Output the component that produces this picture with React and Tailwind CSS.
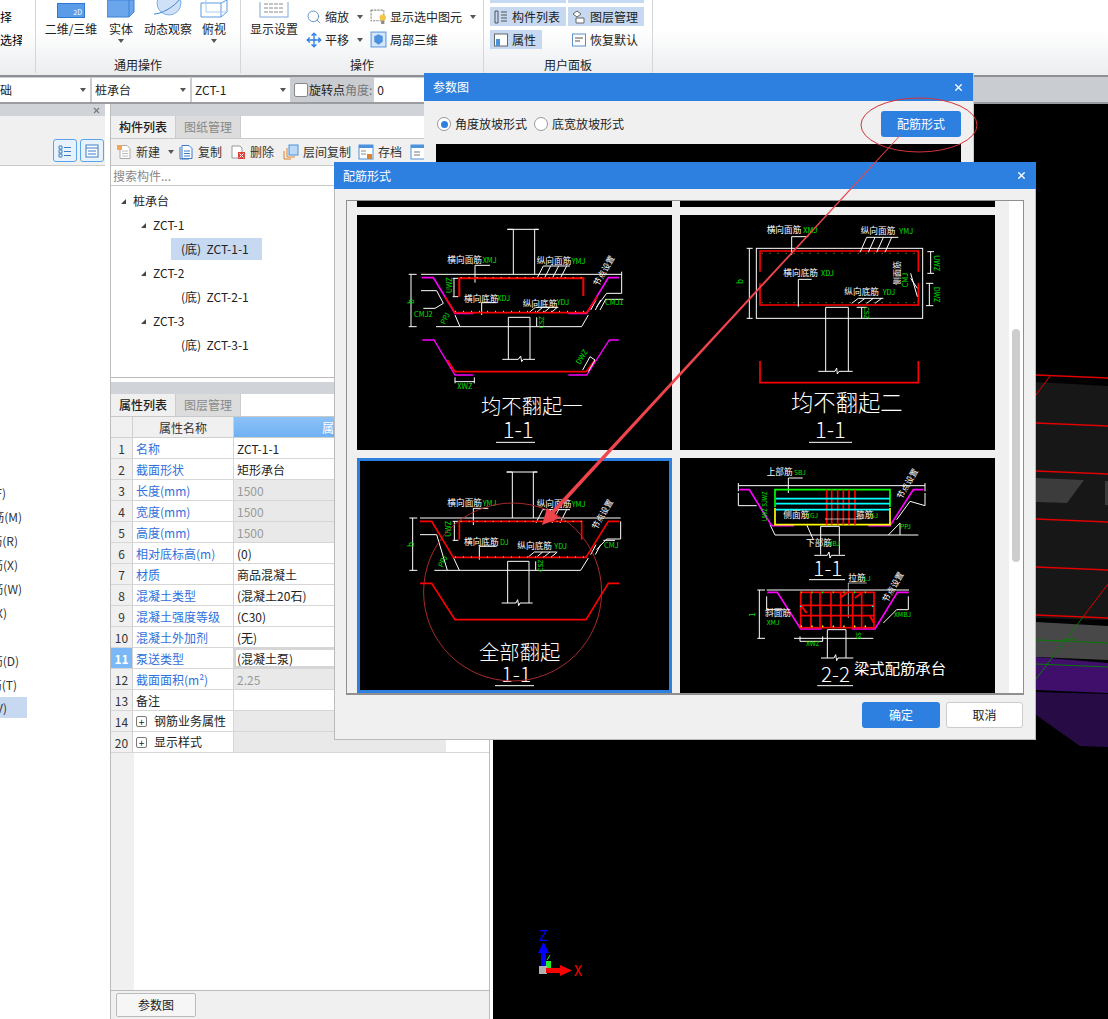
import React from 'react';
import { Search, Move, X } from 'lucide-react';

const W = 'white', G = '#00e000', R = '#ff0000', M = '#ff00ff', Y = '#ffff00', C = '#00ffff';
const L = ({ p, c = W, w = 3, d }) => <polyline points={p} fill="none" stroke={c} strokeWidth={w} strokeDasharray={d} />;
const T = ({ x, y, c = W, s = 26, r, children, w }) => (
  <text x={x} y={y} fill={c} fontSize={s} fontWeight={w} transform={r ? `rotate(${r} ${x} ${y})` : undefined}>{children}</text>
);
const Hatch = ({ xs, y1, y2, dx }) => xs.map((x) => <L key={x} p={`${x},${y1} ${x + dx},${y2}`} />);
const Slope = ({ x, y, r = -60 }) => <T x={x} y={y} r={r} s={25}>节点设置</T>;

function Thumb1() {
  return (
    <svg viewBox="51 45 945 705" className="block w-[315px] h-[235px] bg-black">
      <L p="243,223 845,223" />
      <L p="520,223 520,88 502,88 596,88 584,88 584,223" />
      <L p="213,223 213,380" /><L p="206,223 230,223" /><L p="206,380 230,380" />
      <L p="243,272 290,272 310,310 285,325 250,325" />
      <L p="288,380 725,380 745,345" /><L p="345,345 360,380" />
      <L p="505,478 505,352 570,352 570,478" /><L p="487,478 535,478 542,468 545,485 550,478 585,478" />
      <L p="590,352 590,380" />
      <L p="845,215 845,280 800,280 770,320" /><L p="795,298 850,298" />
      <L p="405,248 405,196 450,196" /><L p="425,345 425,308 470,308" />
      <L p="342,235 342,290" /><L p="338,235 355,235" /><L p="338,290 355,290" />
      <Hatch xs={[590, 612, 636, 660]} y1={237} y2={198} dx={20} /><L p="610,198 690,198" />
      <Hatch xs={[568, 590, 612, 634]} y1={337} y2={322} dx={18} /><L p="586,322 655,322" />
      <Hatch xs={[752, 766, 780]} y1={330} y2={300} dx={16} />
      <L p="245,233 280,233 345,340 400,340" c={M} w={5} />
      <L p="685,340 740,340 805,233 838,233" c={M} w={5} />
      <L p="358,290 358,235 730,235 730,288" c={R} w={6} />
      <L p="315,290 345,338 740,338 772,290" c={R} w={5} />
      <L p="362,233 730,233" c={Y} w={3} d="3 21" /><L p="345,334 740,334" c={Y} w={3} d="3 21" />
      <L p="247,420 282,420 345,525 400,525" c={M} w={4} /><L p="685,525 740,525 808,420 836,420" c={M} w={4} />
      <L p="322,480 345,515 738,515 765,480" c={R} w={5} />
      <L p="345,532 345,550" /><L p="403,532 403,550" /><L p="345,545 403,545" />
      <L p="728,510 750,470 765,480 745,515" />
      <T x={322} y={189}>横向面筋</T><T x={428} y={189} c={G} s={22}>XMJ</T>
      <T x={590} y={192}>纵向面筋</T><T x={695} y={192} c={G} s={22}>YMJ</T>
      <T x={372} y={305}>横向底筋</T><T x={472} y={303} c={G} s={22}>XDJ</T>
      <T x={548} y={320}>纵向底筋</T><T x={650} y={314} c={G} s={22}>YDJ</T>
      <T x={222} y={350} c={G} s={22}>CMJ2</T><T x={795} y={315} c={G} s={22}>CMJ1</T>
      <T x={352} y={566} c={G} s={22}>XWZ</T><T x={222} y={312} c={G} s={24} r={-90}>b</T>
      <T x={335} y={280} c={G} s={22} r={-90}>UWZ</T><T x={612} y={385} c={G} s={20} r={-90}>CSZ</T>
      <T x={315} y={375} c={G} s={22} r={-65}>PPJ</T><T x={720} y={495} c={G} s={22} r={-60}>DWZ</T>
      <Slope x={775} y={260} />
      <T x={423} y={643} s={61} w={300}>均不翻起一</T>
      <T x={488} y={713} s={66} w={300}>1-1</T><L p="468,727 585,727" />
    </svg>
  );
}

function Thumb2() {
  return (
    <svg viewBox="30 45 945 705" className="block w-[315px] h-[235px] bg-black">
      <rect x="259" y="145" width="499" height="210" fill="none" stroke={W} strokeWidth="3" />
      <L p="238,145 238,355" /><L p="230,145 248,145" /><L p="230,355 248,355" />
      <L p="782,155 782,220" /><L p="772,155 792,155" /><L p="772,220 792,220" />
      <L p="778,250 778,317" /><L p="768,250 790,250" /><L p="768,317 790,317" />
      <L p="270,215 270,153 745,153 745,215" c={R} w={5} /><L p="270,250 270,315 745,315 745,250" c={R} w={5} />
      <L p="275,160 740,160" c={Y} w={2} d="3 21" /><L p="275,308 740,308" c={Y} w={2} d="3 21" />
      <L p="365,165 365,110 415,110" /><L p="385,320 385,238 425,238" /><L p="590,112 685,112" /><L p="565,295 640,295" />
      <Hatch xs={[570, 595, 620, 645]} y1={157} y2={112} dx={20} /><Hatch xs={[545, 565, 590, 615]} y1={310} y2={295} dx={20} />
      <L p="722,220 742,290" /><L p="722,235 742,265" />
      <L p="467,514 467,322 535,322 535,514" /><L p="445,514 495,514 500,504 502,522 507,514 548,514" />
      <L p="575,322 575,355" /><L p="560,322 590,322" />
      <T x={290} y={100}>横向面筋</T><T x={400} y={100} c={G} s={22}>XMJ</T>
      <T x={572} y={102}>纵向面筋</T><T x={688} y={102} c={G} s={22}>YMJ</T>
      <T x={340} y={228}>横向底筋</T><T x={453} y={228} c={G} s={22}>XDJ</T>
      <T x={523} y={284}>纵向底筋</T><T x={638} y={284} c={G} s={22}>YDJ</T>
      <T x={220} y={252} c={G} s={24} r={-90}>b</T>
      <T x={793} y={165} c={G} s={22} r={90}>UWZ</T><T x={793} y={260} c={G} s={22} r={90}>DWZ</T>
      <T x={582} y={320} c={G} s={20} r={90}>CSZ</T>
      <T x={690} y={255} s={24} r={-90}>侧面筋</T><T x={715} y={262} c={G} s={22} r={-90}>CMJ</T>
      <L p="270,483 270,548 745,548 745,483" c={R} w={5} />
      <T x={363} y={634} s={67} w={300}>均不翻起二</T>
      <T x={435} y={713} s={66} w={300}>1-1</T><L p="417,727 546,727" />
    </svg>
  );
}

function Thumb3() {
  return (
    <div className="w-[315px] h-[235px] border-[3px] border-[#2e80e0] bg-black">
      <svg viewBox="60 34 927 687" className="block w-[309px] h-[229px]">
        <L p="240,205 842,205" />
        <L p="517,205 517,67 500,67 592,67 580,67 580,205" />
        <L p="218,205 218,362" /><L p="208,205 232,205" /><L p="208,362 232,362" />
        <L p="240,255 290,255 322,362" /><L p="340,323 358,362" />
        <L p="283,362 722,362 745,325" />
        <L p="503,460 503,335 567,335 567,460" /><L p="485,460 528,460 533,450 536,468 540,460 578,460" />
        <L p="587,335 587,362" /><L p="343,215 343,272" /><L p="338,215 355,215" /><L p="338,272 355,272" />
        <L p="400,226 400,176 445,176" /><L p="418,330 418,290 470,290" />
        <L p="842,215 842,268 800,268 770,300" /><L p="790,272 825,272" />
        <Hatch xs={[588, 612, 636, 660]} y1={220} y2={180} dx={20} /><L p="608,180 690,180" />
        <Hatch xs={[565, 590, 612, 634]} y1={322} y2={307} dx={18} /><L p="583,307 650,307" />
        <Hatch xs={[752, 766]} y1={315} y2={285} dx={16} />
        <L p="358,270 358,215 725,215 725,270" c={R} w={5} />
        <L p="240,215 275,215 340,323 738,323 805,215 838,215" c={R} w={5} />
        <L p="362,215 725,215" c={Y} w={3} d="3 21" /><L p="345,322 735,322" c={Y} w={3} d="3 21" />
        <L p="240,401 275,401 345,510 738,510 805,401 838,401" c={R} w={5} />
        <T x={322} y={170}>横向面筋</T><T x={428} y={170} c={G} s={22}>YMJ</T>
        <T x={590} y={172}>纵向面筋</T><T x={695} y={172} c={G} s={22}>YMJ</T>
        <T x={372} y={287}>横向底筋</T><T x={480} y={287} c={G} s={22}>DJ</T>
        <T x={532} y={299}>纵向底筋</T><T x={643} y={299} c={G} s={22}>YDJ</T>
        <T x={792} y={296} c={G} s={22}>CMJ</T><T x={222} y={292} c={G} s={24} r={-90}>b</T>
        <T x={332} y={262} c={G} s={22} r={-90}>UWZ</T><T x={610} y={366} c={G} s={20} r={-90}>CSZ</T>
        <T x={308} y={355} c={G} s={22} r={-65}>PPJ</T>
        <Slope x={770} y={242} />
        <T x={417} y={630} s={61} w={300}>全部翻起</T>
        <T x={484} y={697} s={64} w={300}>1-1</T><L p="465,708 582,708" />
      </svg>
    </div>
  );
}

function Thumb4() {
  const vs = [470, 485, 503, 520, 537, 555];
  const gs = [423, 450, 483, 512, 548, 575];
  return (
    <svg viewBox="30 25 945 705" className="block w-[315px] h-[235px] bg-black">
      <L p="205,108 765,108" /><L p="205,100 205,125" /><L p="765,100 765,125" />
      <L p="205,130 205,168 260,168" /><L p="765,130 765,168 720,155 680,210" />
      <L p="315,256 745,256" /><L p="300,225 315,256" /><L p="655,256 690,220 690,256" />
      <L p="355,130 355,85 398,85" /><L p="410,225 430,270" />
      <L p="452,315 452,230 508,230 508,315" /><L p="433,317 472,317 477,307 480,325 484,317 525,317" />
      <L p="208,120 238,120 305,228 372,228" c={M} w={5} /><L p="595,228 660,228 730,120 760,120" c={M} w={5} />
      <L p="315,172 315,120 660,120 660,172" c="#00ff00" w={5} />
      <L p="315,175 315,225 660,225 660,175" c={Y} w={5} />
      {vs.map((x) => <L key={x} p={`${x},120 ${x},225`} c={R} w={5} />)}
      <L p="318,147 660,147" c={C} w={5} /><L p="318,162 660,162" c={C} w={5} /><L p="318,180 660,180" c={C} w={5} />
      <L p="465,208 575,208" w={2} />
      <T x={290} y={75}>上部筋</T><T x={372} y={75} c={G} s={20}>SBJ</T>
      <T x={340} y={205}>侧面筋</T><T x={408} y={205} c={G} s={20}>CGJ</T>
      <T x={558} y={205}>箍筋</T><T x={600} y={205} c={G} s={20}>GJ</T>
      <T x={690} y={238} c={G} s={20}>PPJ</T>
      <T x={408} y={288}>下部筋</T><T x={475} y={288} c={G} s={20}>XBJ</T>
      <T x={292} y={215} c={G} s={18} r={-90}>UWZ SJWZ</T>
      <Slope x={695} y={150} />
      <T x={430} y={378} s={62} w={300}>1-1</T><L p="417,390 525,390" />

      <L p="290,421 717,421" /><L p="268,421 268,566" /><L p="262,421 285,421" /><L p="262,566 285,566" />
      <L p="290,440 290,480 340,480" /><L p="715,440 715,480 680,480 640,520" />
      <L p="372,566 610,566" />
      <L p="472,625 472,540 528,540 528,625" /><L p="453,625 492,625 497,615 500,633 504,625 550,625" />
      <L p="535,505 535,400 590,400" w={2} />
      <L p="292,428 322,428 392,538 455,538" c={M} w={5} /><L p="545,538 615,538 682,428 716,428" c={M} w={5} />
      <rect x="392" y="428" width="220" height="106" fill="none" stroke={R} strokeWidth="5" />
      {gs.map((x) => <L key={x} p={`${x},428 ${x},534`} c={R} w={5} />)}
      <L p="392,467 612,467" c={R} w={5} /><L p="392,498 612,498" c={R} w={5} />
      <L p="392,428 612,428" c="#00ff00" w={5} d="4 28" /><L p="392,530 612,530" c={Y} w={5} d="4 28" />
      <L p="395,470 410,490" c={R} w={6} /><L p="600,500 612,520" c={R} w={6} />
      <L p="510,445 530,430" c={R} w={6} /><L p="555,445 575,430" c={R} w={6} />
      <L p="392,468 392,498" c={C} w={5} d="4 26" /><L p="608,468 608,498" c={C} w={5} d="4 26" />
      <L p="390,560 390,575 458,575 458,560" />
      <T x={535} y={395}>拉筋</T><T x={580} y={395} c={G} s={20}>LJ</T>
      <T x={285} y={500}>斜面筋</T><T x={290} y={525} c={G} s={20}>XMJ</T>
      <T x={408} y={588} c={G} s={20}>XWZ</T><T x={672} y={503} c={G} s={20}>XMBJ</T>
      <T x={256} y={502} c={G} s={24} r={-90}>1</T><T x={557} y={548} c={G} s={18} r={90}>SS</T>
      <Slope x={652} y={460} />
      <T x={453} y={696} s={62} w={300}>2-2</T><L p="442,708 549,708" />
      <T x={552} y={672} s={46}>梁式配筋承台</T>
    </svg>
  );
}

const Caret = ({ className = '' }) => <span className={`inline-block w-0 h-0 border-x-[3.5px] border-x-transparent border-t-[4px] border-t-[#555] ${className}`} />;

const Ico = ({ children, className = 'w-4 h-4' }) => <svg viewBox="0 0 16 16" className={`shrink-0 ${className}`} fill="none">{children}</svg>;

function Big({ w, icon, label, caret }) {
  return (
    <div className={`flex flex-col items-center ${w}`}>
      <div className="h-[18px] flex items-end overflow-hidden">{icon}</div>
      <div className="mt-[2px] h-[18px] leading-[18px] whitespace-nowrap text-[#222]">{label}</div>
      {caret && <Caret className="mt-[1px]" />}
    </div>
  );
}

function Ribbon() {
  const Group = ({ w, label, children }) => (
    <div className={`${w} h-[73px] border-r border-[#d4d6d9] flex flex-col shrink-0`}>
      <div className="h-[57px] flex overflow-hidden">{children}</div>
      <div className="h-[16px] leading-[16px] text-center text-[#222] whitespace-nowrap">{label}</div>
    </div>
  );
  const Rw = ({ icon, label, caret, cls = '' }) => (
    <div className={`h-[19px] flex items-center gap-[3px] whitespace-nowrap text-[#222] ${cls}`}>{icon}<span>{label}</span>{caret && <Caret className="ml-[5px]" />}</div>
  );
  return (
    <div className="h-[77px] border-b-2 border-[#8d8f92] bg-gradient-to-b from-white from-[40%] to-[#ebedef] flex">
      <Group w="w-[36px]" label="">
        <div className="flex flex-col gap-[4px] pt-[7px] w-[22px] overflow-hidden">
          <div className="h-[19px] leading-[19px]">择</div>
          <div className="h-[19px] leading-[19px] whitespace-nowrap">选择</div>
        </div>
      </Group>
      <Group w="w-[205px]" label="通用操作">
        <div className="flex pl-[8px]">
          <Big w="w-[54px]" label="二维/三维" icon={<div className="w-[28px] h-[15px] bg-[#5a9ce8] border border-[#2c78d0] flex items-end justify-end pr-[2px] text-[7px] leading-[9px] text-white">2D</div>} />
          <Big w="w-[46px]" label="实体" caret icon={<svg viewBox="0 0 28 18" className="w-[28px] h-[18px]"><path d="M0 0h22l5-0v12l-5 5H0z" fill="#6ba6ec" stroke="#3b82d6" /><path d="M22 0v17" stroke="#3b82d6" /></svg>} />
          <Big w="w-[48px]" label="动态观察" icon={<svg viewBox="0 0 30 18" className="w-[30px] h-[18px]"><circle cx="16" cy="3" r="12" fill="#cfe1f7" stroke="#7fb0e6" /><path d="M1 14C8 14 20 8 28 -2" stroke="#3b82d6" fill="none" /></svg>} />
          <Big w="w-[44px]" label="俯视" caret icon={<svg viewBox="0 0 28 18" className="w-[28px] h-[18px]"><path d="M1 3v14h20V3M21 17l6-5V0M1 3h20l6-3" fill="none" stroke="#5b9be0" /><path d="M6 0v12h21" stroke="#a9cbed" fill="none" /></svg>} />
        </div>
      </Group>
      <Group w="w-[243px]" label="操作">
        <div className="flex pl-[9px]">
          <Big w="w-[48px]" label="显示设置" icon={<svg viewBox="0 0 30 16" className="w-[30px] h-[16px]"><rect x="1" y="-6" width="28" height="21" fill="#fff" stroke="#7fa8d6" /><path d="M5 2h20M5 6h20M5 10h20" stroke="#8a8a8a" strokeDasharray="4 1" /></svg>} />
          <div className="flex flex-col gap-[4px] pt-[7px] ml-[8px] w-[64px]">
            <Rw label="缩放" caret icon={<Search className="w-[16px] h-[16px] text-[#6a93c0]" strokeWidth={1.5} />} />
            <Rw label="平移" caret icon={<Move className="w-[16px] h-[16px] text-[#2c7fe0]" strokeWidth={2} />} />
          </div>
          <div className="flex flex-col gap-[4px] pt-[7px]">
            <Rw label="显示选中图元" caret cls="gap-[2px]" icon={<Ico className="w-[17px] h-[17px]"><rect x="1" y="2" width="12" height="10" fill="#fff" stroke="#888" strokeDasharray="2 1" /><circle cx="12" cy="9" r="3" fill="#f5c542" /><rect x="10.500" y="12" width="3" height="3" fill="#888" /></Ico>} />
            <Rw label="局部三维" cls="gap-[2px]" icon={<Ico className="w-[17px] h-[17px]"><rect x="1" y="1" width="14" height="14" fill="#d5e6f8" stroke="#5b9be0" /><path d="M8 3l4 2v5l-4 3-4-3V5z" fill="#4d92dc" /></Ico>} />
          </div>
        </div>
      </Group>
      <Group w="w-[169px]" label="用户面板">
        <div className="flex flex-col pl-[6px] w-full">
          <div className="h-[3px] flex"><div className="w-[76px] bg-[#c6d9f0]" /><div className="w-[76px] ml-[2px] bg-[#c6d9f0]" /></div>
          <div className="flex mt-[4px]">
            <Rw cls="w-[76px] bg-[#c6d9f0] px-[3px]" label="构件列表" icon={<Ico><path d="M2 2h3v12H2zM8 3h6M8 6h6M8 9h6M8 12h6" stroke="#555" /></Ico>} />
            <Rw cls="w-[76px] ml-[2px] bg-[#c6d9f0] px-[3px]" label="图层管理" icon={<Ico><path d="M6 2l-4 3 4 3 4-3zM5 9h8v5H5z" stroke="#666" fill="#fff" /></Ico>} />
          </div>
          <div className="flex mt-[4px]">
            <Rw cls="w-[52px] bg-[#c6d9f0] px-[3px]" label="属性" icon={<Ico><rect x="1.500" y="2" width="13" height="12" stroke="#666" fill="#fff" /><rect x="3" y="7" width="4" height="7" fill="#4d92dc" /></Ico>} />
            <Rw cls="ml-[26px] px-[3px]" label="恢复默认" icon={<Ico><rect x="1.500" y="2" width="13" height="12" stroke="#5b8fc8" fill="#fff" /><path d="M4 6h8M4 9h5" stroke="#555" /></Ico>} />
          </div>
        </div>
      </Group>
    </div>
  );
}

const Sel = ({ w, label, cut }) => (
  <div className={`${w} h-[24px] bg-white flex items-center justify-between pr-[4px] ${cut ? '' : 'pl-[3px]'} whitespace-nowrap overflow-hidden`}>
    <span className={cut ? '-ml-[12px]' : ''}>{label}</span><Caret />
  </div>
);

function ToolRow() {
  return (
    <div className="h-[27px] border-b-2 border-[#9a9c9f] bg-[#c9ccd1] flex items-center gap-[2px] text-[#222]">
      <Sel w="w-[90px]" label="基础" cut />
      <Sel w="w-[98px]" label="桩承台" />
      <Sel w="w-[98px]" label="ZCT-1" />
      <div className="ml-[2px] w-[14px] h-[14px] bg-white border border-[#888] rounded-[2px]" />
      <span className="-ml-[1px] whitespace-nowrap">旋转点</span>
      <span className="-ml-[2px] text-[#777] whitespace-nowrap">角度:</span>
      <div className="w-[60px] h-[24px] bg-white pl-[3px] leading-[24px]">0</div>
    </div>
  );
}

function LeftPanel() {
  const rows = [['w-[6px]', '(F)'], ['w-[22px]', '筋(M)'], ['w-[18px]', '筋(R)'], ['w-[18px]', '筋(X)'], ['w-[22px]', '筋(W)'], ['w-[7px]', '(X)'], ['w-0', ''], ['w-[19px]', '筋(D)'], ['w-[17px]', '筋(T)'], ['w-[7px]', '(V)']];
  return (
    <div className="w-[105px] shrink-0 bg-white flex flex-col">
      <div className="h-[12px] bg-[#d0d3d8] flex items-center justify-end pr-[4px]"><X className="w-[9px] h-[9px] text-[#777]" strokeWidth={3} /></div>
      <div className="h-[50px] bg-[#f0f0f0] border-b border-[#ccc] flex items-end justify-end gap-[3px] pb-[3px] pr-[1px]">
        <div className="w-[24px] h-[23px] border border-[#5aa4ec] rounded-[3px] bg-[#e8f2fc] flex items-center justify-center">
          <Ico><path d="M2 3h3v3H2zM2 7h3v3H2zM2 11h3v3H2zM7 4.500h7M7 8.500h7M7 12.500h7" stroke="#3d7fc4" /></Ico>
        </div>
        <div className="w-[24px] h-[23px] border border-[#5aa4ec] rounded-[3px] bg-[#e8f2fc] flex items-center justify-center">
          <Ico><rect x="2" y="2" width="12" height="12" stroke="#3d7fc4" fill="#fff" /><path d="M2 5h12M4 8h8M4 11h8" stroke="#3d7fc4" /></Ico>
        </div>
      </div>
      <div className="pt-[315px] flex flex-col text-[#333]">
        {rows.map(([w, t], i) => (
          <div key={i} className={i === 9 ? 'w-[27px] h-[21px] leading-[21px] bg-[#c6d9f0]' : 'h-[24px] leading-[24px]'}>
            <div className={`${w} flex justify-end overflow-hidden whitespace-nowrap`}>{t}</div>
          </div>
        ))}
      </div>
    </div>
  );
}

function Tabs({ a, b, h }) {
  return (
    <div className={`${h} flex border-b border-[#c9c9c9] bg-white`}>
      <div className="w-[65px] bg-[#f0f0f0] flex items-center justify-center font-medium text-[#222] border-r border-[#ccc]">{a}</div>
      <div className="w-[65px] bg-[#dcdcdc] flex items-center justify-center text-[#888] border-r border-[#ccc]">{b}</div>
    </div>
  );
}

function Tree() {
  const Row = ({ pad, arrow, label, hl }) => (
    <div className={`h-[24px] flex items-center whitespace-pre ${pad}`}>
      {arrow && <span className="w-0 h-0 mr-[7px] border-l-[5px] border-l-transparent border-b-[5px] border-b-[#444]" />}
      <span className={hl ? 'h-[22px] leading-[22px] bg-[#c6d9f0] pl-[10px] pr-[13px] -ml-[10px]' : ''}>{label}</span>
    </div>
  );
  return (
    <div className="h-[192px] bg-white border-b border-[#bbb] pt-[3px] text-[#222]">
      <Row pad="pl-[10px]" arrow label="桩承台" />
      <Row pad="pl-[30px]" arrow label="ZCT-1" />
      <Row pad="pl-[70px]" hl label="(底)  ZCT-1-1" />
      <Row pad="pl-[30px]" arrow label="ZCT-2" />
      <Row pad="pl-[70px]" label="(底)  ZCT-2-1" />
      <Row pad="pl-[30px]" arrow label="ZCT-3" />
      <Row pad="pl-[70px]" label="(底)  ZCT-3-1" />
    </div>
  );
}

function MidToolbar() {
  const B = ({ icon, label, caret, cls }) => (
    <div className={`flex items-center gap-[4px] whitespace-nowrap ${cls}`}>{icon}<span>{label}</span>{caret && <Caret className="ml-[4px]" />}</div>
  );
  const D = 'M4 1.500h7l3 3v10H4z';
  return (
    <div className="h-[27px] bg-[#f0f0f0] border-b border-[#c9c9c9] flex items-center pl-[5px] text-[#333] overflow-hidden">
      <B icon={<Ico><path d={D} fill="#fff" stroke="#aaa" /><path d="M6 7h6M6 9.500h6M6 12h6" stroke="#bbb" /><rect x="1" y="1" width="5" height="5" fill="#f2a65a" /></Ico>} label="新建" caret />
      <B cls="ml-[4px]" icon={<Ico><path d={D} fill="#fff" stroke="#3a7bc8" /><path d="M6 7h6M6 9.500h6M6 12h6" stroke="#3a7bc8" /><path d="M2 3v12h9" stroke="#3a7bc8" /></Ico>} label="复制" />
      <B cls="ml-[8px]" icon={<Ico><path d="M2 2h8l2 2v10H2z" fill="#fff" stroke="#999" /><rect x="8" y="8" width="7" height="7" fill="#d9433b" /><path d="M9.500 9.500l4 4M13.500 9.500l-4 4" stroke="#fff" /></Ico>} label="删除" />
      <B cls="ml-[9px]" icon={<Ico><rect x="6" y="1" width="9" height="10" fill="#bcd9f5" stroke="#4d92dc" /><path d="M4 4v9h8M1 7v8h7" stroke="#e0802a" /></Ico>} label="层间复制" />
      <B cls="ml-[7px]" icon={<Ico><rect x="1" y="1" width="14" height="14" fill="#fff" stroke="#4d92dc" /><rect x="1" y="1" width="14" height="3" fill="#4d92dc" /><path d="M3 7h5M3 10h5" stroke="#888" /><rect x="9" y="10" width="5" height="5" fill="#e0802a" /></Ico>} label="存档" />
      <B cls="ml-[8px]" icon={<Ico><rect x="1" y="1" width="14" height="14" fill="#fff" stroke="#4d92dc" /><rect x="1" y="1" width="14" height="3" fill="#4d92dc" /><path d="M4 8h6M4 11h6" stroke="#777" /></Ico>} label="" />
    </div>
  );
}

const props = [
  [1, '名称', 'ZCT-1-1'], [2, '截面形状', '矩形承台'], [3, '长度(mm)', '1500', 1], [4, '宽度(mm)', '1500', 1], [5, '高度(mm)', '1500', 1],
  [6, '相对底标高(m)', '(0)'], [7, '材质', '商品混凝土'], [8, '混凝土类型', '(混凝土20石)'], [9, '混凝土强度等级', '(C30)'], [10, '混凝土外加剂', '(无)'],
  [11, '泵送类型', '(混凝土泵)'], [12, '截面面积(m²)', '2.25', 1],
];

function PropTable() {
  const numCls = 'w-[22px] shrink-0 bg-[#f0f0f0] border-r border-[#d0d0d0] text-center text-[#333] leading-[21px]';
  return (
    <div className="flex-1 flex flex-col bg-white relative">
      <div className="h-[21px] flex border-b border-[#d0d0d0]">
        <div className={numCls} />
        <div className="w-[101px] bg-[#f0f0f0] border-r border-[#d0d0d0] text-center leading-[21px] text-[#333]">属性名称</div>
        <div className="w-[212px] bg-gradient-to-b from-[#8cc2f8] to-[#70b0f3] text-center leading-[21px] text-white">属性值</div>
        <div className="flex-1 bg-[#f0f0f0]" />
      </div>
      {props.map(([n, k, v, g]) => (
        <div key={n} className="h-[21px] flex border-b border-[#d6d6d6]">
          <div className={n === 11 ? 'w-[22px] shrink-0 bg-[#7ab8f8] border-r border-[#d0d0d0] text-center text-white font-bold leading-[21px]' : numCls}>{n}</div>
          <div className="w-[101px] border-r border-[#d6d6d6] pl-[3px] leading-[21px] text-[#2f70dc] whitespace-nowrap">{k}</div>
          <div className={`w-[212px] border-r border-[#d6d6d6] ${g ? 'bg-[#e9e9e9] text-[#999]' : 'text-[#222]'} ${n === 11 ? 'border-2 border-[#808080] pl-[1px] leading-[17px]' : 'pl-[3px] leading-[21px]'}`}>{v}</div>
          <div className="flex-1" />
        </div>
      ))}
      <div className="h-[21px] flex border-b border-[#d6d6d6]">
        <div className={numCls}>13</div>
        <div className="w-[101px] border-r border-[#d6d6d6] pl-[3px] leading-[21px] text-[#222]">备注</div>
        <div className="w-[212px] border-r border-[#d6d6d6]" /><div className="flex-1" />
      </div>
      {[[14, '钢筋业务属性'], [20, '显示样式']].map(([n, k]) => (
        <div key={n} className="h-[21px] flex border-b border-[#d6d6d6]">
          <div className={numCls}>{n}</div>
          <div className="w-[101px] border-r border-[#d6d6d6] pl-[3px] flex items-center gap-[7px] text-[#222] whitespace-nowrap">
            <span className="w-[11px] h-[11px] border border-[#777] rounded-[2px] flex items-center justify-center text-[10px] leading-[9px]">+</span>{k}
          </div>
          <div className="w-[212px] bg-[#e9e9e9]" /><div className="flex-1" />
        </div>
      ))}
      <div className="flex-1 flex"><div className="w-[23px] bg-[#f0f0f0]" /><div className="flex-1" /></div>
    </div>
  );
}

function MidPanel() {
  return (
    <div className="w-[380px] shrink-0 flex flex-col border-x border-[#bcbcbc] text-[#222]">
      <div className="h-[12px] bg-[#d0d3d8]" />
      <Tabs a="构件列表" b="图纸管理" h="h-[23px]" />
      <MidToolbar />
      <div className="h-[20px] bg-white border-b border-[#c9c9c9] pl-[2px] leading-[19px] text-[#888]">搜索构件...</div>
      <Tree />
      <div className="h-[4px] bg-white" />
      <div className="h-[12px] bg-[#d0d3d8]" />
      <Tabs a="属性列表" b="图层管理" h="h-[23px]" />
      <PropTable />
      <div className="h-[29px] bg-[#f0f0f0] border-t border-[#bcbcbc] pl-[5px] pt-[2px]">
        <div className="w-[80px] h-[24px] bg-[#f6f6f6] border border-[#bbb] rounded-[2px] text-center leading-[22px]">参数图</div>
      </div>
    </div>
  );
}

function Viewport() {
  const reds = [375, 423, 471, 519, 567, 615];
  return (
    <svg viewBox="493 104 615 915" className="flex-1 h-full bg-black block">
      <path d="M1036 382L1108 386V620L1036 618z" fill="#171717" />
      <path d="M1036 478L1084 480L1067 503L1036 502z" fill="#3c3c3c" />
      <path d="M1105 481H1108V505H1105z" fill="#3c3c3c" />
      <path d="M1036 622L1108 626V660L1036 657z" fill="#484848" />
      <path d="M1036 657L1108 663V693L1036 690z" fill="#3f0f6b" />
      <path d="M1036 692L1108 694V747L1080 746L1036 715z" fill="#270b45" />
      {reds.map((y) => <line key={y} x1="1036" y1={y} x2="1108" y2={y + 3} stroke="#e00000" strokeWidth="1.300" />)}
      <line x1="1050" y1="376" x2="1036" y2="395" stroke="#e00000" />
      <line x1="1083" y1="617" x2="1108" y2="584" stroke="#e00000" />
      <line x1="1036" y1="679" x2="1083" y2="617" stroke="#0a7a0a" />
      <line x1="1036" y1="640" x2="1108" y2="643" stroke="#0a7a0a" />
      <line x1="1036" y1="664" x2="1108" y2="667" stroke="#0a7a0a" />
      <line x1="1053" y1="641" x2="1076" y2="639" stroke="#0a7a0a" />
      <rect x="545" y="961" width="6" height="7" fill="#22ee22" />
      <path d="M545 960l-1-4M547 960l3-5" stroke="#22ee22" />
      <rect x="541" y="950" width="5" height="17" fill="#0000ff" />
      <path d="M543.500 942L549 953H538z" fill="#0000ff" />
      <rect x="539" y="966" width="8" height="8" fill="#b0b0b0" />
      <rect x="546" y="968" width="17" height="5" fill="#ff0000" />
      <path d="M572 970.500L560 965V976z" fill="#ff0000" />
      <text x="539" y="941" fill="#0000ff" fontSize="15">Z</text>
      <text x="574" y="976" fill="#ff0000" fontSize="14">X</text>
    </svg>
  );
}

function TitleBar({ label, h }) {
  return (
    <div className={`${h} bg-[#2e80e0] flex items-center justify-between pl-[9px] pr-[9px] text-white`}>
      <span>{label}</span><X className="w-[11px] h-[11px]" strokeWidth={3} />
    </div>
  );
}

function Dialog1() {
  const Radio = ({ on, label }) => (
    <div className="flex items-center gap-[4px]">
      <span className="w-[14px] h-[14px] rounded-full bg-white border border-[#999] flex items-center justify-center">
        {on && <span className="w-[7px] h-[7px] rounded-full bg-[#2e80e0]" />}
      </span>{label}
    </div>
  );
  return (
    <div className="absolute left-[424px] top-[73px] w-[550px] h-[300px] bg-[#f0f0f0] border-r border-[#c6c8cc] text-[#222]">
      <TitleBar label="参数图" h="h-[28px]" />
      <div className="h-[43px] flex items-center justify-between pl-[13px] pr-[12px] pt-[3px]">
        <div className="flex items-center gap-[7px]"><Radio on label="角度放坡形式" /><Radio label="底宽放坡形式" /></div>
        <div className="w-[80px] h-[26px] rounded-[3px] bg-[#2e80e0] text-white text-center leading-[26px]">配筋形式</div>
      </div>
      <div className="mx-[12px] h-[200px] bg-black" />
    </div>
  );
}

function Dialog2() {
  return (
    <div className="absolute left-[334px] top-[162px] w-[702px] h-[578px] bg-[#f0f0f0] border-x border-b border-[#bbb] text-[#222] flex flex-col">
      <div className="-mx-px"><TitleBar label="配筋形式" h="h-[27px]" /></div>
      <div className="mt-[11px] ml-[11px] w-[678px] h-[495px] border border-[#8f8f8f] border-b-[2px] bg-[#f0f0f0] flex overflow-hidden">
        <div className="flex-1 pl-[10px] grid grid-cols-[315px_315px] gap-x-[8px] gap-y-[8px] content-start">
          <div className="h-[6px] bg-black" /><div className="h-[6px] bg-black" />
          <Thumb1 /><Thumb2 /><Thumb3 /><Thumb4 />
        </div>
        <div className="w-[14px] h-full bg-white pt-[128px] pl-[3px]">
          <div className="w-[8px] h-[233px] rounded-full bg-[#cdcdcd]" />
        </div>
      </div>
      <div className="flex justify-end gap-[6px] pr-[12px] mt-[7px]">
        <div className="w-[78px] h-[26px] rounded-[3px] bg-[#2e80e0] text-white text-center leading-[26px]">确定</div>
        <div className="w-[77px] h-[26px] rounded-[3px] bg-white border border-[#ccc] text-center leading-[24px]">取消</div>
      </div>
    </div>
  );
}

function Marks() {
  return (
    <svg viewBox="0 0 1108 1019" className="absolute inset-0 w-[1108px] h-[1019px] pointer-events-none">
      <ellipse cx="919" cy="125" rx="58" ry="27" fill="none" stroke="#d6323a" strokeWidth="1" />
      <circle cx="512.600" cy="592" r="89" fill="none" stroke="#a82a2e" strokeWidth="1" />
      <path d="M900 135L900.500 135.500L553 515L550 512.500z" fill="#f0444c" />
      <path d="M542 525L547 508L560 518z" fill="#f0444c" />
    </svg>
  );
}

export default function App() {
  return (
    <div className="relative w-[1108px] h-[1019px] overflow-hidden bg-white text-[12px] font-['Noto_Sans_CJK_SC','Noto_Sans',sans-serif]">
      <Ribbon />
      <ToolRow />
      <div className="flex h-[915px]">
        <LeftPanel />
        <div className="w-[5px] shrink-0 bg-white" />
        <MidPanel />
        <div className="w-[3px] shrink-0 bg-white" />
        <Viewport />
      </div>
      <Dialog1 />
      <Dialog2 />
      <Marks />
    </div>
  );
}
